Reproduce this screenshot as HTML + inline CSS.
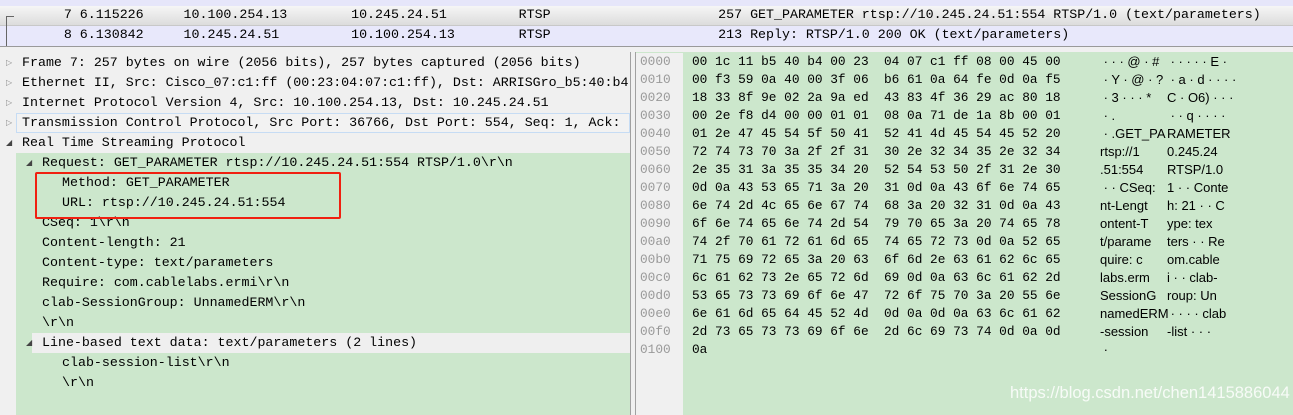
<!DOCTYPE html>
<html><head><style>
body{margin:0;width:1293px;height:415px;overflow:hidden;background:#f0f0f0;position:relative;font-family:"Liberation Mono",monospace;}
.a{position:absolute;white-space:pre;}
.m{font-size:13.3px;line-height:20px;color:#000;}
.h{font-size:12.8px;line-height:18px;color:#000;}
.s{font-family:"Liberation Sans","DejaVu Sans",sans-serif;font-size:13px;line-height:18px;}
.tri{position:absolute;font-size:8px;color:#888;}
</style></head><body>
<div class="a" style="left:0;top:0;width:1293px;height:6px;background:#e6e6fa"></div>
<div class="a" style="left:0;top:6px;width:1293px;height:19px;background:linear-gradient(#f6f6f6,#dcdcdc);border-bottom:1px solid #c8c8c8"></div>
<div class="a" style="left:0;top:26px;width:1293px;height:20px;background:#e8e8fb;border-bottom:1px solid #9a9a9a"></div>
<div class="a" style="left:6px;top:16px;width:1px;height:30px;background:#666"></div>
<div class="a" style="left:6px;top:16px;width:8px;height:1px;background:#666"></div>
<div class="a m" style="left:0;top:5px">        7 6.115226     10.100.254.13        10.245.24.51         RTSP                     257 GET_PARAMETER rtsp://10.245.24.51:554 RTSP/1.0 (text/parameters)</div>
<div class="a m" style="left:0;top:25px">        8 6.130842     10.245.24.51         10.100.254.13        RTSP                     213 Reply: RTSP/1.0 200 OK (text/parameters)</div>

<div class="a" style="left:0;top:52px;width:630px;height:363px;background:#f0f0f0;border-right:1px solid #a0a0a0"></div>
<div class="a" style="left:16px;top:153px;width:614px;height:262px;background:#cce7cc"></div>
<div class="a" style="left:16px;top:53px;width:614px;height:100px;background:#f0f0f0"></div>
<div class="a" style="left:16px;top:113px;width:612px;height:18px;border:1px solid #c6dcf4;background:#f2f2f2"></div>
<div class="a" style="left:32px;top:333px;width:598px;height:20px;background:#efefef"></div>
<div class="tri" style="left:6px;top:58px">▷</div>
<div class="tri" style="left:6px;top:78px">▷</div>
<div class="tri" style="left:6px;top:98px">▷</div>
<div class="tri" style="left:6px;top:118px">▷</div>
<div class="tri" style="left:6px;top:138px;color:#444">◢</div>
<div class="tri" style="left:26px;top:158px;color:#444">◢</div>
<div class="tri" style="left:26px;top:338px;color:#444">◢</div>
<div class="a m" style="left:22px;top:53px">Frame 7: 257 bytes on wire (2056 bits), 257 bytes captured (2056 bits)
Ethernet II, Src: Cisco_07:c1:ff (00:23:04:07:c1:ff), Dst: ARRISGro_b5:40:b4
Internet Protocol Version 4, Src: 10.100.254.13, Dst: 10.245.24.51
Transmission Control Protocol, Src Port: 36766, Dst Port: 554, Seq: 1, Ack:
Real Time Streaming Protocol</div>
<div class="a m" style="left:42px;top:153px">Request: GET_PARAMETER rtsp://10.245.24.51:554 RTSP/1.0\r\n


CSeq: 1\r\n
Content-length: 21
Content-type: text/parameters
Require: com.cablelabs.ermi\r\n
clab-SessionGroup: UnnamedERM\r\n
\r\n
Line-based text data: text/parameters (2 lines)</div>
<div class="a m" style="left:62px;top:173px">Method: GET_PARAMETER
URL: rtsp://10.245.24.51:554</div>
<div class="a m" style="left:62px;top:353px">clab-session-list\r\n
\r\n</div>
<div class="a" style="left:35px;top:172px;width:302px;height:43px;border:2px solid #f02010;border-radius:2px"></div>

<div class="a" style="left:635px;top:52px;width:658px;height:363px;background:#cce7cc;border-left:1px solid #a0a0a0"></div>
<div class="a" style="left:636px;top:53px;width:47px;height:362px;background:#f0f0f0"></div>
<div class="a h" style="left:640px;top:53px;color:#999">0000
0010
0020
0030
0040
0050
0060
0070
0080
0090
00a0
00b0
00c0
00d0
00e0
00f0
0100</div>
<div class="a h" style="left:692px;top:53px">00 1c 11 b5 40 b4 00 23  04 07 c1 ff 08 00 45 00
00 f3 59 0a 40 00 3f 06  b6 61 0a 64 fe 0d 0a f5
18 33 8f 9e 02 2a 9a ed  43 83 4f 36 29 ac 80 18
00 2e f8 d4 00 00 01 01  08 0a 71 de 1a 8b 00 01
01 2e 47 45 54 5f 50 41  52 41 4d 45 54 45 52 20
72 74 73 70 3a 2f 2f 31  30 2e 32 34 35 2e 32 34
2e 35 31 3a 35 35 34 20  52 54 53 50 2f 31 2e 30
0d 0a 43 53 65 71 3a 20  31 0d 0a 43 6f 6e 74 65
6e 74 2d 4c 65 6e 67 74  68 3a 20 32 31 0d 0a 43
6f 6e 74 65 6e 74 2d 54  79 70 65 3a 20 74 65 78
74 2f 70 61 72 61 6d 65  74 65 72 73 0d 0a 52 65
71 75 69 72 65 3a 20 63  6f 6d 2e 63 61 62 6c 65
6c 61 62 73 2e 65 72 6d  69 0d 0a 63 6c 61 62 2d
53 65 73 73 69 6f 6e 47  72 6f 75 70 3a 20 55 6e
6e 61 6d 65 64 45 52 4d  0d 0a 0d 0a 63 6c 61 62
2d 73 65 73 73 69 6f 6e  2d 6c 69 73 74 0d 0a 0d
0a</div>
<div class="a s" style="left:1100px;top:53px"> · · · @ · #
 · Y · @ · ?
 · 3 · · · *
 · .
 · .GET_PA
rtsp://1
.51:554
 · · CSeq:
nt-Lengt
ontent-T
t/parame
quire: c
labs.erm
SessionG
namedERM
-session
 ·</div>
<div class="a s" style="left:1167px;top:53px"> · · · · · E ·
 · a · d · · · ·
C · O6) · · ·
 · · q · · · ·
RAMETER
0.245.24
RTSP/1.0
1 · · Conte
h: 21 · · C
ype: tex
ters · · Re
om.cable
i · · clab-
roup: Un
 · · · · clab
-list · · ·</div>
<div class="a" style="left:1010px;top:384px;font-family:'Liberation Sans',sans-serif;font-size:16.5px;color:#fff;opacity:.85">https://blog.csdn.net/chen1415886044</div>
</body></html>
